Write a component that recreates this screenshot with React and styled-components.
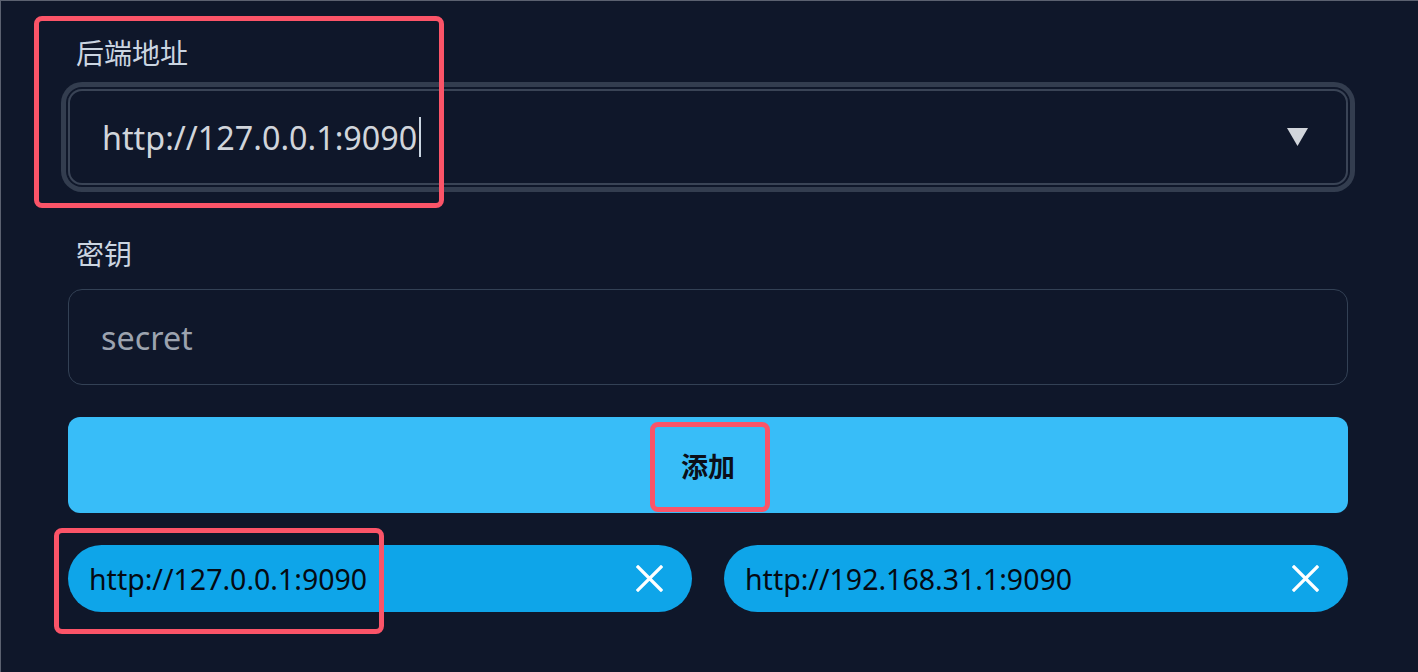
import React from "react";
import styled, { createGlobalStyle } from "styled-components";

const GlobalStyle = createGlobalStyle`
  html, body {
    margin: 0;
    padding: 0;
    background: #0f172a;
  }
  body {
    font-family: "Noto Sans", "Noto Sans CJK SC", sans-serif;
  }
`;

const Page = styled.div`
  position: relative;
  box-sizing: border-box;
  width: 1418px;
  height: 672px;
  overflow: hidden;
  background: #0f172a;
  border-top: 1px solid #5b6170;
  border-left: 1px solid #5b6170;
  padding: 31px 70px 0 67px;
`;

const Form = styled.div`
  display: flex;
  flex-direction: column;
`;

const Field = styled.div`
  display: flex;
  flex-direction: column;
  margin-bottom: ${(p) => p.$gap || 32}px;
`;

const Label = styled.label`
  padding-left: 8px;
  height: 40px;
  line-height: 40px;
  font-family: "Noto Sans CJK SC", sans-serif;
  font-size: 28px;
  color: #cbd5e1;
  margin-bottom: ${(p) => p.$gap || 17}px;
`;

const Box = styled.div`
  box-sizing: border-box;
  height: 96px;
  display: flex;
  align-items: center;
  padding: 0 38px 0 32px;
  border-style: solid;
  border-radius: 14px;
  font-size: 32.3px;
  color: ${(p) => (p.$placeholder ? "#9ca3af" : "#d1d5db")};
  box-shadow: ${(p) =>
    p.$focused ? "0 0 0 2px #0f172a, 0 0 0 7px #333d4f" : "none"};
  border-width: ${(p) => (p.$focused ? "2px" : "1px")};
  border-color: ${(p) => (p.$focused ? "#3a4456" : "#334155")};
`;

const Value = styled.span`
  flex: 1;
  display: flex;
  align-items: center;
`;

const Caret = styled.span`
  display: inline-block;
  width: 2px;
  height: 40px;
  margin-left: 2px;
  background: #cbd5e1;
`;

const AddButton = styled.button`
  height: 96px;
  border: none;
  border-radius: 12px;
  background: #38bdf8;
  color: #0b0f19;
  font-family: "Noto Sans CJK SC", "Noto Sans", sans-serif;
  font-size: 27px;
  font-weight: 700;
  margin-bottom: 32px;
  cursor: pointer;
`;

const ChipGrid = styled.div`
  display: grid;
  grid-template-columns: 1fr 1fr;
  gap: 32px;
`;

const Chip = styled.div`
  height: 67px;
  border-radius: 34px;
  background: #0ea5e9;
  display: flex;
  align-items: center;
  justify-content: space-between;
  padding: 0 29px 0 21px;
  font-size: 28.5px;
  color: #050a12;
`;

const Mark = styled.div`
  position: absolute;
  box-sizing: border-box;
  border: 5px solid #fb5468;
  border-radius: 8px;
  pointer-events: none;
`;

const Arrow = () => (
  <svg width="21" height="18" viewBox="0 0 21 18">
    <polygon points="0,0 21,0 10.5,18" fill="#d1d5db" />
  </svg>
);

const Close = () => (
  <svg width="27" height="27" viewBox="0 0 27 27">
    <path
      d="M2 2 L25 25 M25 2 L2 25"
      stroke="#ffffff"
      strokeWidth="3.2"
      strokeLinecap="square"
      fill="none"
    />
  </svg>
);

const hosts = ["http://127.0.0.1:9090", "http://192.168.31.1:9090"];

const App = () => (
  <Page>
    <GlobalStyle />
    <Form>
      <Field $gap={48}>
        <Label>后端地址</Label>
        <Box $focused>
          <Value>
            http://127.0.0.1:9090
            <Caret />
          </Value>
          <Arrow />
        </Box>
      </Field>
      <Field $gap={32}>
        <Label $gap={16}>密钥</Label>
        <Box $placeholder>secret</Box>
      </Field>
      <AddButton>添加</AddButton>
      <ChipGrid>
        {hosts.map((h) => (
          <Chip key={h}>
            <span>{h}</span>
            <Close />
          </Chip>
        ))}
      </ChipGrid>
    </Form>
    <Mark style={{ left: 33, top: 15, width: 410, height: 192 }} />
    <Mark style={{ left: 649, top: 421, width: 120, height: 90 }} />
    <Mark style={{ left: 53, top: 527, width: 330, height: 106 }} />
  </Page>
);

export default App;
